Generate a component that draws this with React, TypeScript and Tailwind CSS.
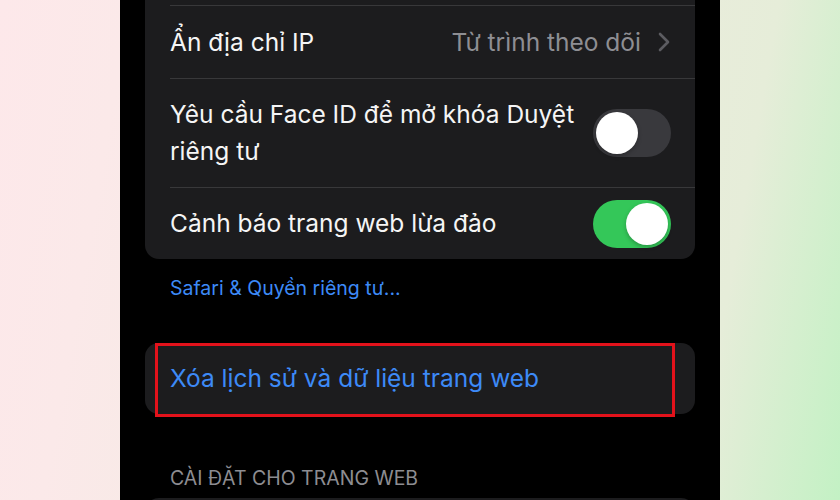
import React from "react";

function Toggle({ on }: { on: boolean }) {
  return (
    <div
      className={
        "flex h-[48px] w-[78px] shrink-0 items-center rounded-full px-[3px] " +
        (on ? "justify-end bg-[#34c759]" : "justify-start bg-[#39393d]")
      }
    >
      <div className="h-[42px] w-[42px] rounded-full bg-white shadow-[0_2px_4px_rgba(0,0,0,0.25)]" />
    </div>
  );
}

function Chevron() {
  return (
    <svg width="12" height="20" viewBox="0 0 12 20" fill="none">
      <path d="M2 2l8 8-8 8" stroke="#5c5c61" strokeWidth="2.6" strokeLinecap="round" strokeLinejoin="round" />
    </svg>
  );
}

export default function App() {
  return (
    <div
      className="flex h-[500px] w-[840px] justify-center overflow-hidden bg-[linear-gradient(100deg,#fde8ea_0%,#fbe9e9_14%,#e6edd9_84%,#c3f1c4_100%)]"
      style={{ fontFamily: "Inter, 'Noto Sans', sans-serif" }}
    >
      <div className="flex h-[500px] w-[600px] flex-col overflow-hidden bg-black px-[25px]">
        {/* Card 1 */}
        <div className="-mt-[19px] flex shrink-0 flex-col rounded-[14px] bg-[#1c1c1e]">
          <div className="ml-[25px] h-[25px] shrink-0 border-b border-[#38383a]" />
          <div className="ml-[25px] flex h-[73px] shrink-0 items-center justify-between border-b border-[#38383a] pr-[25px]">
            <span className="text-[24.5px] text-[#f5f5f5]">Ẩn địa chỉ IP</span>
            <div className="flex items-center gap-[17px]">
              <span className="text-[24.5px] text-[#8e8e93]">Từ trình theo dõi</span>
              <Chevron />
            </div>
          </div>
          <div className="ml-[25px] flex h-[109px] shrink-0 items-center justify-between border-b border-[#38383a] pr-[24px]">
            <span className="text-[24.5px] leading-[37px] text-[#f5f5f5]">
              Yêu cầu Face ID để mở khóa Duyệt
              <br />
              riêng tư
            </span>
            <Toggle on={false} />
          </div>
          <div className="ml-[25px] flex h-[71px] shrink-0 items-center justify-between pr-[24px]">
            <span className="text-[24.5px] text-[#f5f5f5]">Cảnh báo trang web lừa đảo</span>
            <Toggle on={true} />
          </div>
        </div>

        <div className="mt-[17px] shrink-0 pl-[25px] text-[19.5px] leading-[24px] text-[#3d8af7]">Safari &amp; Quyền riêng tư...</div>

        {/* Card 2 */}
        <div className="relative mt-[43px] flex h-[71px] shrink-0 items-center rounded-[14px] bg-[#1c1c1e] pl-[25px]">
          <span className="text-[24.5px] text-[#3d8af7]">Xóa lịch sử và dữ liệu trang web</span>
          <div className="absolute left-[10px] top-0 h-[74px] w-[520px] border-[3px] border-[#e3121b]" />
        </div>

        <div className="mt-[52px] shrink-0 pl-[25px] text-[19.5px] leading-[24px] text-[#8d8d92]">CÀI ĐẶT CHO TRANG WEB</div>

        <div className="mt-[8px] h-[40px] shrink-0 rounded-t-[14px] bg-[#1c1c1e]" />
      </div>
    </div>
  );
}
